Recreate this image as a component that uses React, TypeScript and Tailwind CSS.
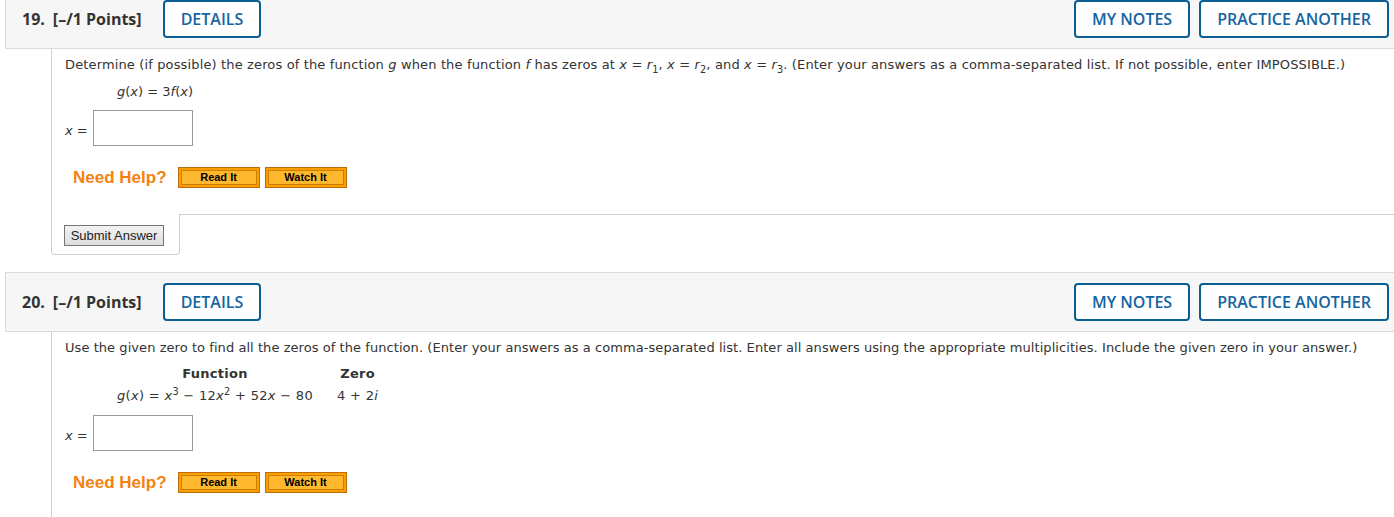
import type { ReactNode } from "react";

function HeaderButton({ children }: { children: ReactNode }) {
  return (
    <button
      type="button"
      className="h-[38px] rounded-[4px] border-2 border-[#0b5e94] bg-white px-[16px] text-[16px] font-semibold text-[#1565a0]"
    >
      {children}
    </button>
  );
}

function QuestionHeader({ num }: { num: string }) {
  return (
    <div className="flex items-center border border-r-0 border-[#dcdcdc] bg-[#f6f6f6] py-[10px] pl-[16px] pr-[5px] font-['Open_Sans',sans-serif]">
      <span className="text-[16px] font-bold text-[#333]">{num}.</span>
      <span className="ml-[8px] text-[16px] font-bold text-[#333]">[–/1 Points]</span>
      <div className="ml-[21px]">
        <HeaderButton>DETAILS</HeaderButton>
      </div>
      <div className="ml-auto flex gap-[9px]">
        <HeaderButton>MY NOTES</HeaderButton>
        <HeaderButton>PRACTICE ANOTHER</HeaderButton>
      </div>
    </div>
  );
}

function HelpButton({ label }: { label: string }) {
  return (
    <button
      type="button"
      className="h-[21px] w-[82px] border border-[#b8700f] bg-[#ff9c00] p-[2px]"
    >
      <span className="flex h-full w-full items-center justify-center border border-[#c98200] bg-[#ffb82e] font-['Liberation_Sans',Arial,sans-serif] text-[11px] font-bold leading-none tracking-normal text-black">
        {label}
      </span>
    </button>
  );
}

function NeedHelp() {
  return (
    <div className="ml-[8px] flex items-center tracking-normal">
      <span className="font-['Liberation_Sans',Arial,sans-serif] text-[17px] font-bold text-[#f5820f]">
        Need Help?
      </span>
      <div className="ml-[11px] flex gap-[5px]">
        <HelpButton label="Read It" />
        <HelpButton label="Watch It" />
      </div>
    </div>
  );
}

function AnswerRow() {
  return (
    <div className="flex items-center">
      <span className="mt-[6px]">
        <i>x</i> =
      </span>
      <div className="ml-[5px] h-[36px] w-[100px] border border-[#999] bg-white" />
    </div>
  );
}

function Sub({ children }: { children: ReactNode }) {
  return <sub className="-bottom-[0.4em]">{children}</sub>;
}

export default function App() {
  return (
    <div className="-mt-[11px] min-h-[540px] overflow-hidden bg-white pl-[5px] font-['DejaVu_Sans',Verdana,sans-serif] text-[13px] leading-[16px] text-[#333]">
      {/* question 19 */}
      <QuestionHeader num="19" />
      <div className="ml-[46px]">
        <div className="border-l border-[#cfcfcf] pb-[26px] pl-[13px] pt-[8px]">
          <p className="whitespace-nowrap tracking-[0.14px]">
            Determine (if possible) the zeros of the function <i>g</i> when the function <i>f</i> has
            zeros at <i>x</i> = <i>r</i>
            <Sub>1</Sub>, <i>x</i> = <i>r</i>
            <Sub>2</Sub>, and <i>x</i> = <i>r</i>
            <Sub>3</Sub>. (Enter your answers as a comma-separated list. If not possible, enter
            IMPOSSIBLE.)
          </p>
          <p className="ml-[52px] mt-[11px]">
            <i>g</i>(<i>x</i>) = 3<i>f</i>(<i>x</i>)
          </p>
          <div className="mt-[10px]">
            <AnswerRow />
          </div>
          <div className="mt-[21px]">
            <NeedHelp />
          </div>
        </div>
        <div className="flex">
          <div className="w-[129px] rounded-b-[4px] border-x border-b border-[#cfcfcf] pb-[8px] pl-[12px] pt-[11px]">
            <button
              type="button"
              className="h-[21px] w-[100px] border border-[#767676] bg-gradient-to-b from-[#f3f3f3] to-[#dedede] font-['Liberation_Sans',Arial,sans-serif] text-[13px] text-[#222]"
            >
              Submit Answer
            </button>
          </div>
          <div className="flex-1 border-t border-[#cfcfcf]" />
        </div>
      </div>

      {/* question 20 */}
      <div className="mt-[17px]">
        <QuestionHeader num="20" />
      </div>
      <div className="ml-[46px]">
        <div className="border-l border-[#cfcfcf] pb-[40px] pl-[13px] pt-[8px]">
          <p className="whitespace-nowrap tracking-[0.06px]">
            Use the given zero to find all the zeros of the function. (Enter your answers as a
            comma-separated list. Enter all answers using the appropriate multiplicities. Include the
            given zero in your answer.)
          </p>
          <div className="ml-[52px] mt-[10px] grid w-max grid-cols-[auto_auto] gap-x-[24px] gap-y-[6px] tracking-[0.3px]">
            <span className="text-center font-bold">Function</span>
            <span className="text-center font-bold">Zero</span>
            <span>
              <i>g</i>(<i>x</i>) = <i>x</i>
              <sup>3</sup> − 12<i>x</i>
              <sup>2</sup> + 52<i>x</i> − 80
            </span>
            <span>
              4 + 2<i>i</i>
            </span>
          </div>
          <div className="mt-[11px]">
            <AnswerRow />
          </div>
          <div className="mt-[21px]">
            <NeedHelp />
          </div>
        </div>
      </div>
    </div>
  );
}
